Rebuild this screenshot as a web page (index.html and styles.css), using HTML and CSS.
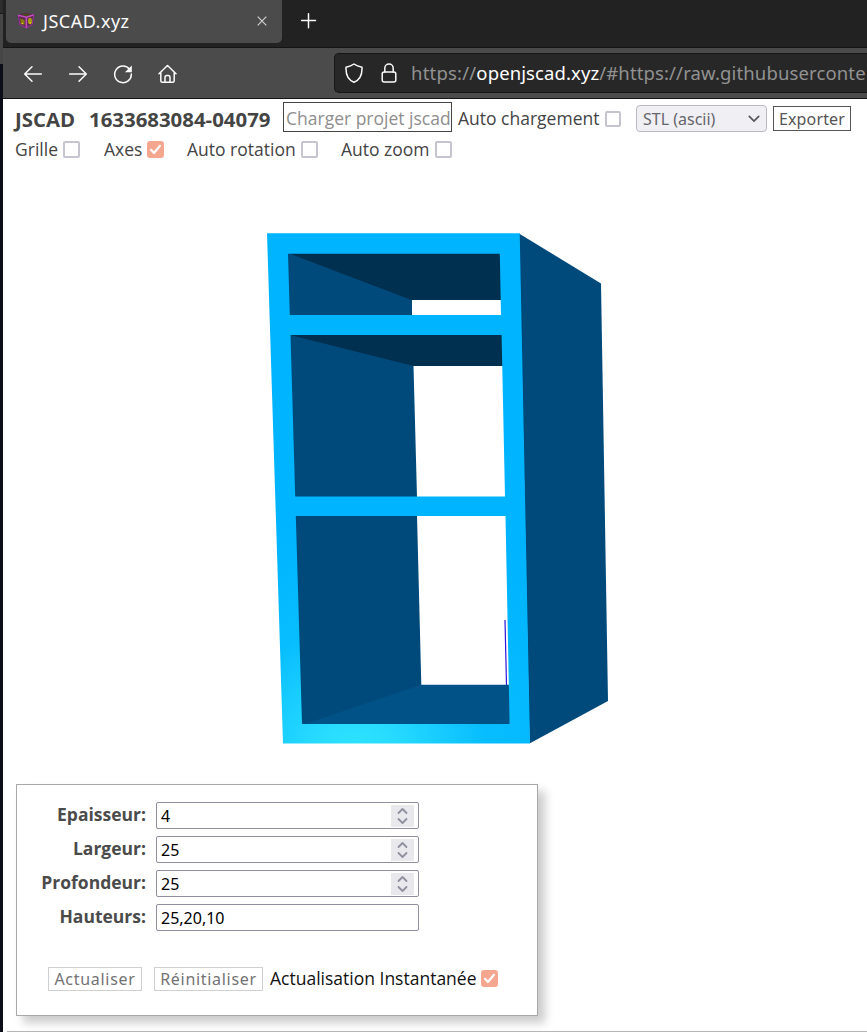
FILE: index.html
```html
<!DOCTYPE html>
<html lang="fr">
<head>
<meta charset="utf-8">
<title>JSCAD.xyz</title>
<link rel="stylesheet" href="styles.css">
</head>
<body>
<div class="screen">
  <div class="backdrop"><div class="backdrop-top"></div><div class="backdrop-mid"></div></div>
  <div class="window">
    <div class="tabbar">
      <div class="tab">
        <svg class="favicon" width="18" height="18" viewBox="0 0 18 18">
          <path d="M.5 3 9 .5l8.500 2-1.500 10.500L9 16.500l-7-3.500z" fill="#5a2a50"/>
          <path d="M3 6.500 7.500 8v5L4 11z" fill="#8c7a0c"/><ellipse cx="13" cy="9" rx="2" ry="3.200" fill="#a89a10"/><path d="M4 2.800 9 1.500l5 1.200-5 1.500z" fill="#484c18"/>
          <path d="M2.500 10.500l2 1 2-1-1 2z" fill="#f5ee00"/><path d="M12 11l2-1-.5 2z" fill="#e5df00"/>
          <path d="M1 3.200l8.500 2.100L17 2.700M9.400 5.500v10.500" fill="none" stroke="#c64cc4" stroke-width="1.500"/>
          <path d="M1.500 4 2.800 12.800 9.300 16 15.300 12.500l1.300-9" fill="none" stroke="#9c3aa0" stroke-width="1"/>
        </svg>
        <span class="tab-title">JSCAD.xyz</span>
        <svg class="tab-close" width="10" height="10" viewBox="0 0 10 10"><path d="M.7.7l8.600 8.600M9.300.7.7 9.300" stroke="#d0d0d0" stroke-width="1.200"/></svg>
      </div>
      <svg class="newtab" width="16" height="16" viewBox="0 0 16 16"><path d="M7.500 .8v14M.5 7.500h14" stroke="#fbfbfb" stroke-width="1.500" stroke-linecap="round"/></svg>
    </div>
    <div class="toolbar">
      <svg class="nav" width="20" height="20" viewBox="0 0 20 20"><path d="M18.300 10H1.700M9 2.800 1.700 10 9 17.200"/></svg>
      <svg class="nav" width="20" height="20" viewBox="0 0 20 20"><path d="M1.700 10h16.600M11 2.800 18.300 10 11 17.200"/></svg>
      <svg class="nav" width="20" height="20" viewBox="0 0 20 20"><path d="M16.600 5.300A8.300 8.300 0 1 0 18.300 10"/><path class="solid" d="M18.800 1.400v6.900h-6.900z"/></svg>
      <svg class="nav" width="20" height="20" viewBox="0 0 20 20"><path d="M1 9.800 9.500 1.500l8.500 8.300M2.800 8.300v8.500q0 1.500 1.500 1.500h10.400q1.500 0 1.500-1.500V8.300M7 18v-4.600q0-1.900 1.900-1.900h1.200q1.900 0 1.900 1.900V18"/></svg>
      <div class="urlbar">
        <svg class="nav" width="20" height="20" viewBox="0 0 20 20"><path d="M10 1Q13 3.200 18 4.200C18.300 11.500 15.500 17 10 19.200 4.500 17 1.700 11.500 2 4.200Q7 3.200 10 1z"/></svg>
        <svg class="nav lock" width="16" height="20" viewBox="0 0 16 20"><rect x="1.200" y="9" width="13.600" height="10" rx="2"/><path d="M3.800 9V5.200a4.200 4.200 0 0 1 8.400 0V9"/></svg>
        <div class="url"><span class="u1">https://</span><b>openjscad.xyz</b><span class="u3">/#https://raw.githubuserconte</span></div>
      </div>
    </div>
    <main class="page">
      <header class="controls">
        <div class="row">
          <b class="brand">JSCAD</b><b class="project">1633683084-04079</b>
          <div class="load">Charger projet jscad</div>
          <span class="t-auto">Auto chargement</span><i class="box"></i>
          <div class="select"><span>STL (ascii)</span><svg width="12" height="8" viewBox="0 0 12 8"><path d="M1.300 1.300 6 6l4.700-4.700" fill="none" stroke="#54545b" stroke-width="1.700" stroke-linecap="round"/></svg></div>
          <div class="export">Exporter</div>
        </div>
        <div class="row options">
          <span class="t-grid">Grille</span><i class="box"></i>
          <span class="t-axes">Axes</span><i class="box on"><svg viewBox="0 0 17 17"><path d="M4 8.800l3 3.200 6-7.200"/></svg></i>
          <span class="t-rot">Auto rotation</span><i class="box"></i>
          <span class="t-zoom">Auto zoom</span><i class="box"></i>
        </div>
      </header>
      <svg class="model" width="864" height="618" viewBox="3 166 864 618">
        <defs>
          <radialGradient id="shine" gradientUnits="userSpaceOnUse" cx="355" cy="757" r="240">
            <stop offset="0" stop-color="#30e3ff"/><stop offset=".16" stop-color="#28dcff"/><stop offset=".55" stop-color="#08bdff"/><stop offset="1" stop-color="#00b4ff"/>
          </radialGradient>
        </defs>
        <path d="M519 233.500 601 283.500 608 701 529.500 743.500z" fill="#004a7b"/>
        <path d="M286 252H501V300H412V316H288z" fill="#004a7b"/>
        <path d="M288 253H501V300H411.500z" fill="#00304f"/>
        <path d="M288 334H503V366H413.500L417 497H293z" fill="#004a7b"/>
        <path d="M290 335H503V366H413.500z" fill="#00304f"/>
        <path d="M293 515H417L421.300 684.700 425 690V726H300z" fill="#004a7b"/>
        <path d="M421.300 684.700H510V725H302z" fill="#005287"/>
        <path d="M505 620 506.500 685" stroke="#2a18d8" stroke-width="1.200"/>
        <path fill="url(#shine)" fill-rule="evenodd" d="M267 233.300H519.700L530 743.500H283zM288 253.800 289.800 315H501L499.800 253.800zM290.500 335 295.200 496.500H505L501.600 335zM295.800 516 302 724H509.600L505.500 516z"/>
      </svg>
      <section class="params">
        <div class="field"><label>Epaisseur:</label><div class="input">4<svg class="spin" viewBox="0 0 23 22"><path d="M7.500 8l4-4 4 4M7.500 14l4 4 4-4"/></svg></div></div>
        <div class="field"><label>Largeur:</label><div class="input">25<svg class="spin" viewBox="0 0 23 22"><path d="M7.500 8l4-4 4 4M7.500 14l4 4 4-4"/></svg></div></div>
        <div class="field"><label>Profondeur:</label><div class="input">25<svg class="spin" viewBox="0 0 23 22"><path d="M7.500 8l4-4 4 4M7.500 14l4 4 4-4"/></svg></div></div>
        <div class="field"><label>Hauteurs:</label><div class="input">25,20,10</div></div>
        <div class="actions">
          <div class="btn update">Actualiser</div><div class="btn reset">Réinitialiser</div>
          <span class="instant">Actualisation Instantanée</span><i class="box on"><svg viewBox="0 0 17 17"><path d="M4 8.800l3 3.200 6-7.200"/></svg></i>
        </div>
      </section>
      <div class="footline"></div>
    </main>
  </div>
</div>
</body>
</html>
```
FILE: styles.css
```css
* { box-sizing: border-box; }
body { margin: 0; font-family: "Noto Sans", "Open Sans", sans-serif; font-size: 17.5px; color: #444; background: #fff; }
.screen { display: flex; width: 867px; height: 1032px; overflow: hidden; white-space: nowrap; }
.backdrop { width: 3px; flex: none; background: #0b0e17; }
.backdrop-top { height: 14px; background: #2d2d2d; border-bottom: 1px solid #191919; }
.backdrop-mid { height: 50px; background: #464646; }
.window { width: 864px; display: flex; flex-direction: column; }
.tabbar { height: 48px; flex: none; display: flex; background: #222; border-bottom: 1px solid #141414; }
.tab { width: 276px; height: 43px; margin-left: 3px; padding: 0 15px 1px 11px; background: #4b4b4b; border-radius: 0 0 5px 5px; display: flex; align-items: center; color: #fafafa; }
.favicon { margin-right: 8px; }
.tab-title { font-size: 18px; letter-spacing: .5px; }
.tab-close { margin-left: auto; }
.newtab { margin: 13px 0 0 19px; }
.toolbar { height: 51px; flex: none; display: flex; align-items: center; background: #4b4b4b; border-bottom: 1px solid #151515; padding: 1px 0 0 20px; gap: 25px; }
.nav { flex: none; fill: none; stroke: #fbfbfb; stroke-width: 1.5; stroke-linecap: round; stroke-linejoin: round; }
.nav .solid { fill: #fbfbfb; stroke: none; }
.urlbar { flex: 1; margin: 0 0 1px 131px; height: 40px; background: #272727; border: 1px solid #171717; border-right: 0; border-radius: 5px 0 0 5px; display: flex; align-items: center; padding-left: 9px; min-width: 0; overflow: hidden; }
.lock { margin-left: 17px; }
.url { margin-left: 14px; padding-bottom: 2px; font-size: 18.5px; color: #929292; display: flex; }
.url b { color: #fff; font-weight: 400; letter-spacing: .1px; }
.u1 { letter-spacing: .2px; }
.u3 { letter-spacing: .13px; }
.page { font-family: "Open Sans", "Noto Sans", sans-serif; height: 933px; background: #fff; display: flex; flex-direction: column; }
.controls { height: 67px; flex: none; padding: 3px 0 0 12px; }
.row { display: flex; align-items: center; height: 33px; }
.brand { width: 74px; font-size: 20.4px; }
.project { width: 194px; font-size: 20.4px; }
.load { width: 169px; height: 30px; border: 1px solid #444; color: #8e8e8e; line-height: 30px; padding-left: 2px; margin: 0 6px 3px 0; overflow: hidden; }
.t-auto { width: 147px; padding-bottom: 1px; }
.box { display: block; flex: none; width: 17px; height: 17px; border: 2px solid #c6c5cf; border-radius: 2px; background: #fff; }
.row:first-child .box { width: 16px; height: 16px; }
.box.on { border: 0; background: #f4a78e; border-radius: 3px; }
.box.on svg { display: block; fill: none; stroke: #fff; stroke-width: 2.200; stroke-linecap: round; stroke-linejoin: round; }
.select, .export, .input, .btn { font-family: "Noto Sans", sans-serif; }
.select { margin-left: 15px; width: 131px; height: 27px; border: 1px solid #bab9c4; border-radius: 4px; background: #f0f0f4; color: #65656c; font-size: 16px; display: flex; align-items: center; justify-content: space-between; padding: 0 6px; }
.export { margin-left: 6px; width: 78px; height: 25px; border: 1px solid #555; color: #555; font-size: 16px; line-height: 24px; text-align: center; letter-spacing: .15px; }
.options { height: 28px; }
.t-grid { width: 48px; }
.t-axes { width: 43px; margin-left: 24px; }
.t-rot { width: 114px; margin-left: 23px; }
.t-zoom { width: 94px; margin-left: 23px; }
.model { display: block; flex: none; }
.params { width: 522px; height: 232px; flex: none; margin: 0 0 0 13px; border: 1px solid #a8a8a8; background: #fff; box-shadow: 7px 7px 9px #ccc; padding: 17px 0 0 24px; }
.field { display: flex; height: 34px; }
.field label { width: 105px; text-align: right; font-weight: 700; color: #4b4b4b; line-height: 25px; margin-right: 10px; }
.input { width: 263px; height: 27px; border: 1px solid #8f8f9d; border-radius: 2px; color: #000; font-size: 16px; line-height: 26px; padding: 0 4px; display: flex; justify-content: space-between; }
.spin { width: 23px; height: 22px; margin-top: 2px; background: #e9e9ed; fill: none; stroke: #8f8f9d; stroke-width: 1.800; stroke-linecap: round; stroke-linejoin: round; }
.actions { display: flex; align-items: center; height: 30px; margin: 25px 0 0 7px; color: #111; }
.btn { margin-top: 2px; height: 24px; border: 1px solid #d0d0d0; color: #737373; font-size: 16px; line-height: 23px; text-align: center; letter-spacing: .7px; }
.update { width: 94px; margin-right: 12px; }
.reset { width: 109px; margin-right: 7px; }
.instant { width: 211px; }
.footline { margin-top: 15px; margin-left: 4px; height: 1px; background: #b5b5b5; flex: none; }
```
